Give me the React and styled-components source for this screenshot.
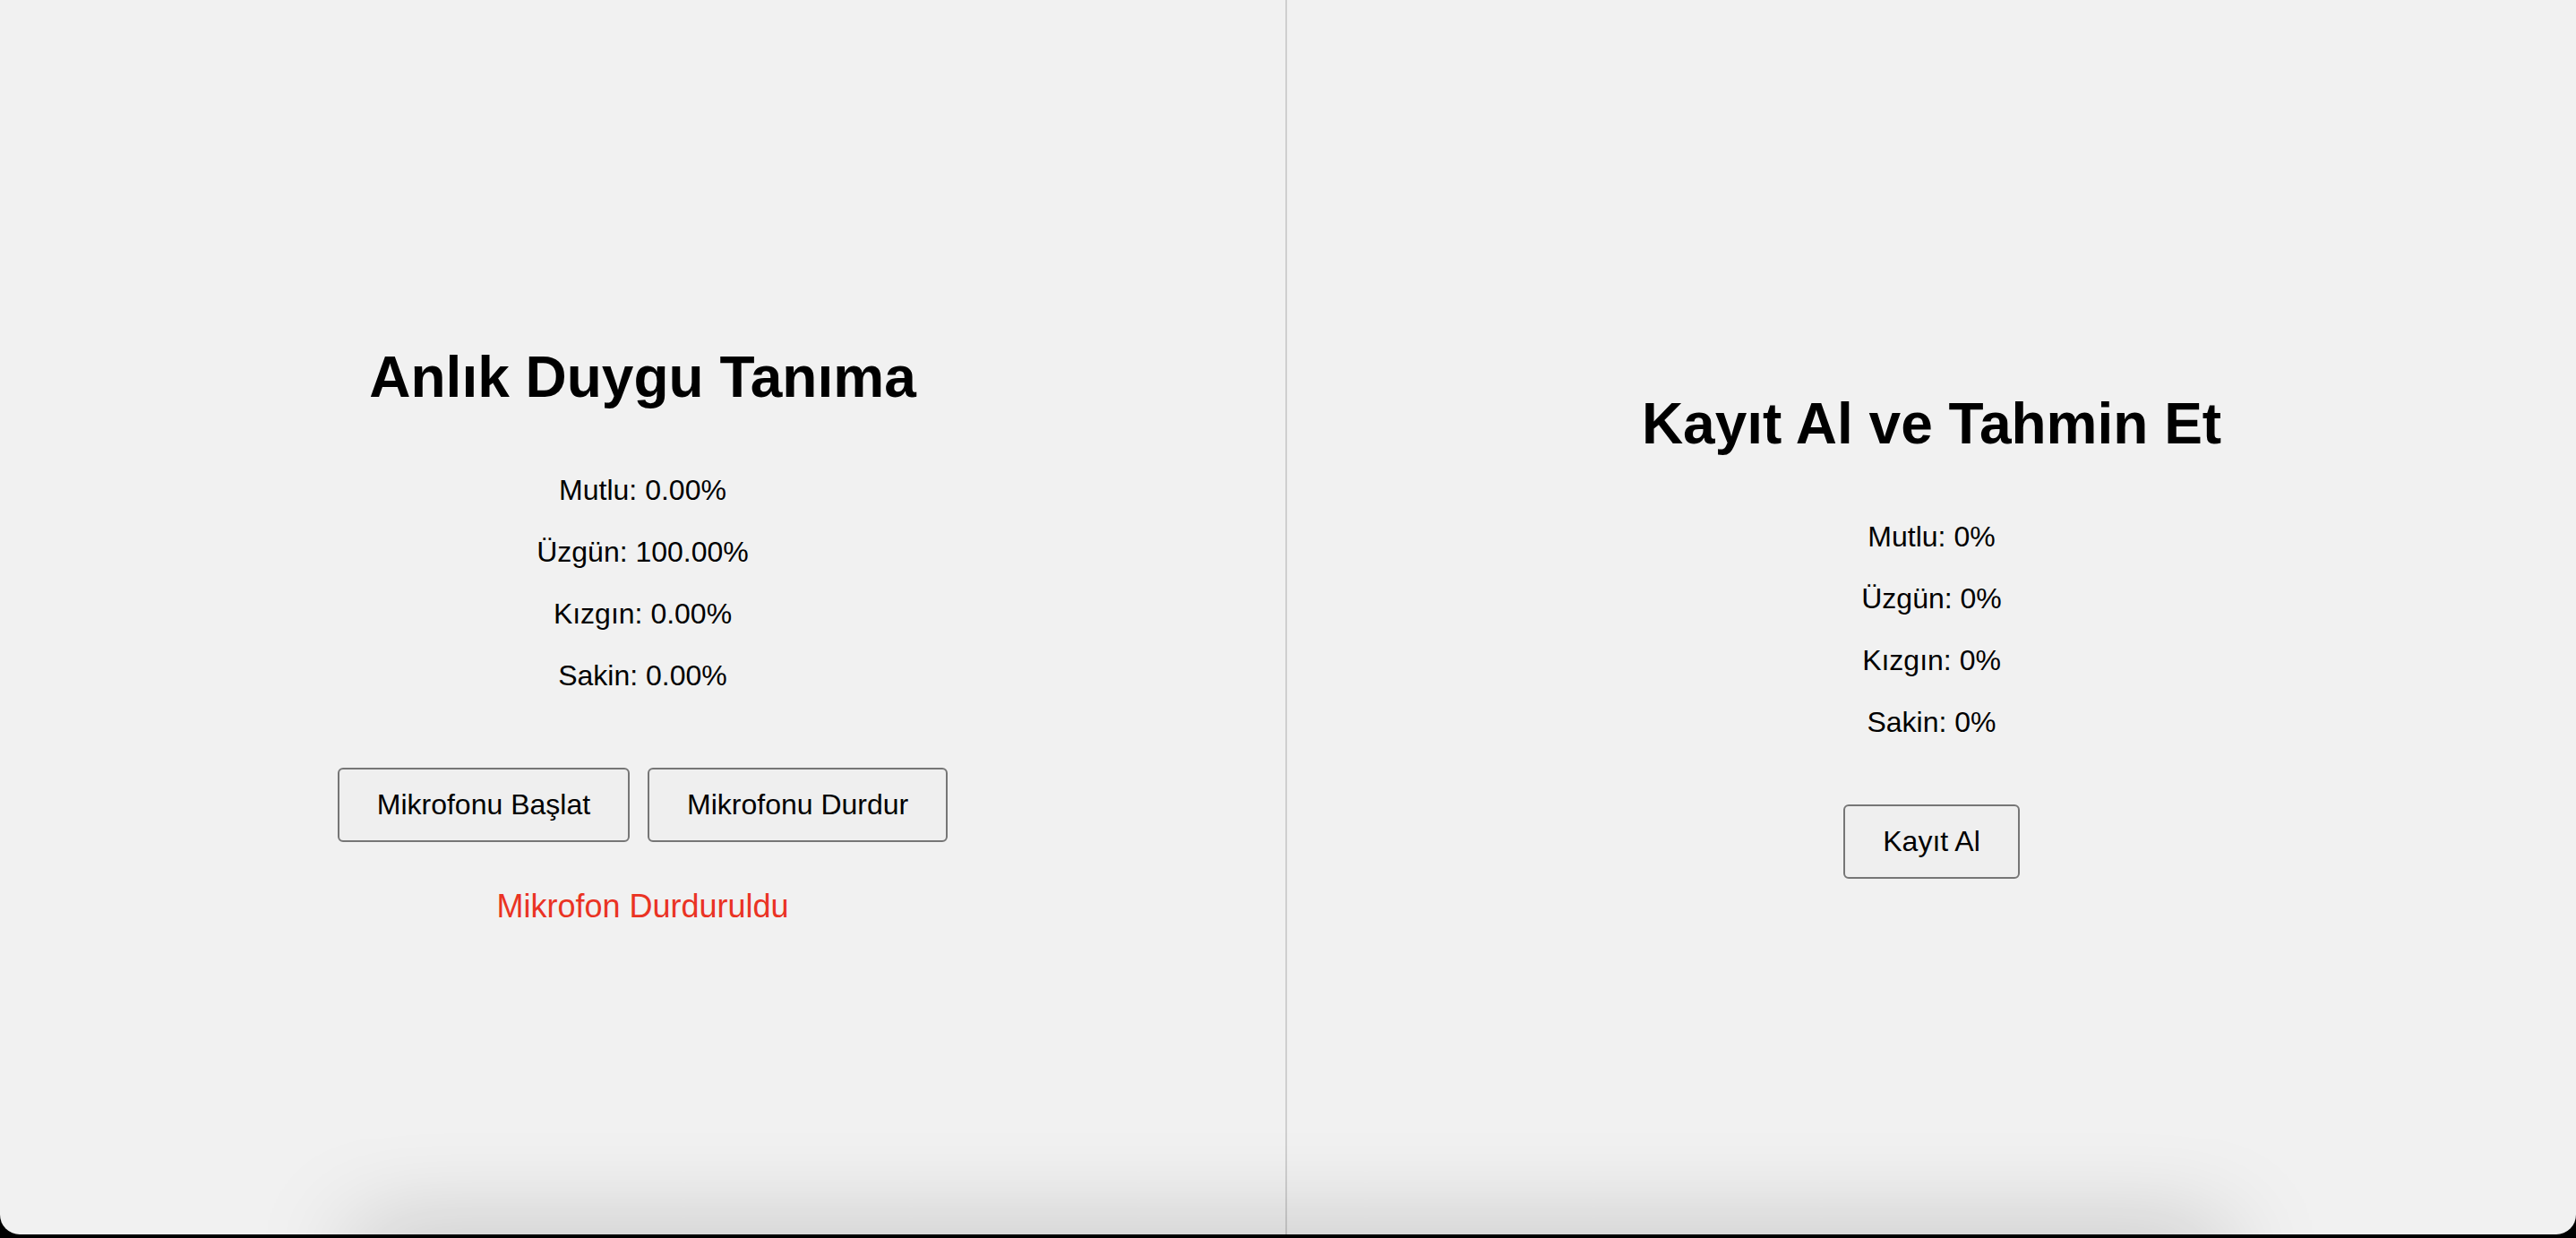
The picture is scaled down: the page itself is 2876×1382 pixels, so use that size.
import styled, { createGlobalStyle } from 'styled-components';

const GlobalStyle = createGlobalStyle`
  html, body {
    margin: 0;
    padding: 0;
    background: #000;
    overflow: hidden;
  }
  body {
    font-family: "Liberation Sans", Arial, Helvetica, sans-serif;
    color: #000;
  }
`;

// Styled Components
const Screen = styled.div`
  position: relative;
  display: flex;
  height: calc(100vh - 4px);
  background: #f1f1f1;
  border-radius: 0 0 22px 22px;
  overflow: hidden;

  &::after {
    content: '';
    position: absolute;
    left: 396px;
    right: 392px;
    top: 100%;
    height: 60px;
    box-shadow: 0 0 110px rgba(0, 0, 0, 0.26);
    pointer-events: none;
  }
`;

const Panel = styled.section`
  width: ${({ $divider }) => ($divider ? 'calc(50% - 1px)' : 'calc(50% + 1px)')};
  box-sizing: border-box;
  display: flex;
  flex-direction: column;
  align-items: center;
  justify-content: center;
  padding-top: 39px;
  border-right: ${({ $divider }) => ($divider ? '2px solid #cfcfcf' : 'none')};
`;

const Content = styled.div`
  text-align: center;
`;

const Title = styled.h1`
  margin: 0;
  font-size: 64px;
  font-weight: 700;
  line-height: normal;
`;

const Stats = styled.div`
  display: flex;
  flex-direction: column;
  gap: 32px;
  margin-top: 71px;
`;

const Stat = styled.p`
  margin: 0;
  font-size: 32px;
  line-height: normal;
`;

const Actions = styled.div`
  display: flex;
  justify-content: center;
  gap: 20px;
  margin-top: ${({ $offset }) => $offset}px;
`;

const Button = styled.button`
  font-family: inherit;
  font-size: 32px;
  line-height: normal;
  padding: 21px 42px;
  border: 2px solid #767676;
  border-radius: 6px;
  background: #efefef;
  color: #000;
  cursor: pointer;
`;

const Status = styled.p`
  margin: 51px 0 0;
  font-size: 36px;
  line-height: normal;
  color: #ea3323;
`;
// Styled Components

const live = { Mutlu: '0.00', 'Üzgün': '100.00', 'Kızgın': '0.00', Sakin: '0.00' };
const recorded = { Mutlu: '0', 'Üzgün': '0', 'Kızgın': '0', Sakin: '0' };

function StatList({ values }) {
  return (
    <Stats>
      {Object.entries(values).map(([label, value]) => (
        <Stat key={label}>{label}: {value}%</Stat>
      ))}
    </Stats>
  );
}

export default function App() {
  return (
    <>
      <GlobalStyle />
      <Screen>
        <Panel $divider>
          <Content>
            <Title>Anlık Duygu Tanıma</Title>
            <StatList values={live} />
            <Actions $offset={84}>
              <Button type="button">Mikrofonu Başlat</Button>
              <Button type="button">Mikrofonu Durdur</Button>
            </Actions>
            <Status>Mikrofon Durduruldu</Status>
          </Content>
        </Panel>
        <Panel>
          <Content>
            <Title>Kayıt Al ve Tahmin Et</Title>
            <StatList values={recorded} />
            <Actions $offset={73}>
              <Button type="button">Kayıt Al</Button>
            </Actions>
          </Content>
        </Panel>
      </Screen>
    </>
  );
}
